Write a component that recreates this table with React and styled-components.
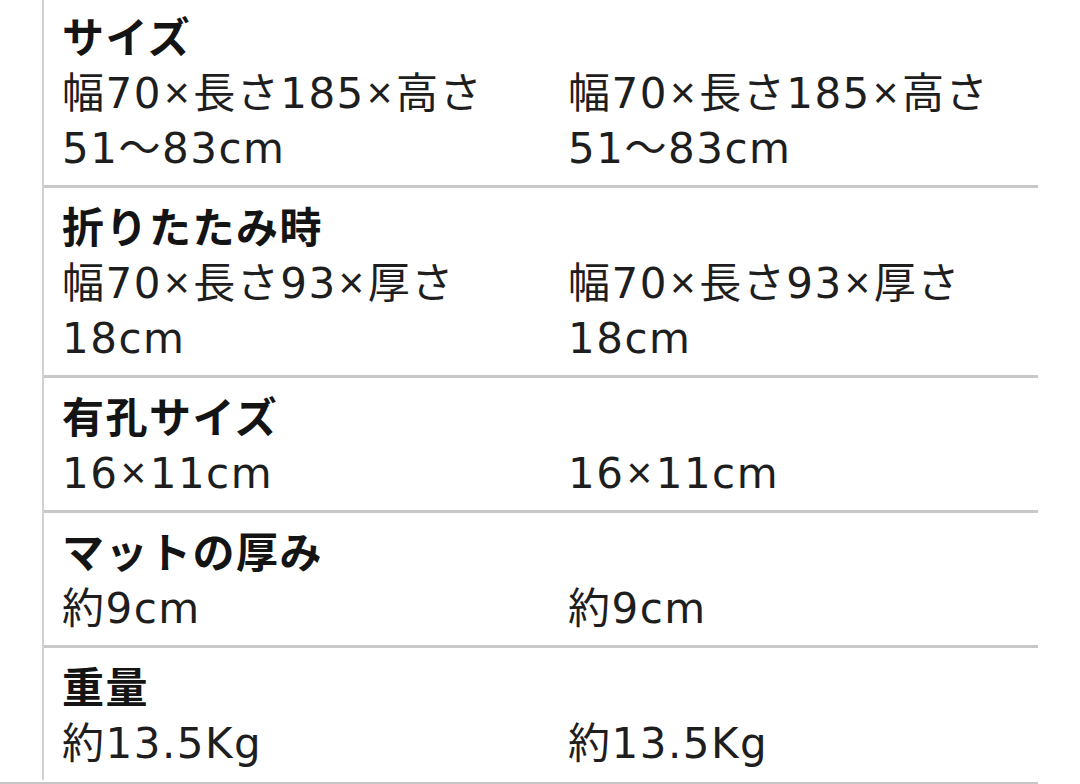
import React from "react";
import styled, { createGlobalStyle } from "styled-components";

const Global = createGlobalStyle`
  html, body { margin: 0; padding: 0; background: #ffffff; }
  body { font-family: "Noto Sans CJK JP", "Noto Sans", sans-serif; color: #1a1a1a; overflow: hidden; }
`;

const Page = styled.div`
  width: 1038px;
  height: 784px;
  box-sizing: border-box;
  border-bottom: 2px solid #c6c6c6;
  overflow: hidden;
`;

const Table = styled.div`
  margin-left: 42px;
  margin-top: -2px;
  border-left: 2px solid #d2d2d2;
  display: flex;
  flex-direction: column;
`;

const Section = styled.section`
  padding: 11px 0 9px 18px;
  border-bottom: ${(p) => (p.$last ? "none" : "3px solid #c8c8c8")};
`;

const Heading = styled.h3`
  margin: 0;
  font-family: "Noto Sans CJK JP", sans-serif;
  font-size: 42px;
  font-weight: 700;
  line-height: 52px;
  color: #141414;
  letter-spacing: 1.5px;
`;

const Values = styled.div`
  display: grid;
  grid-template-columns: 506px 1fr;
  padding-top: 5px;
`;

const Cell = styled.div`
  font-family: "DejaVu Sans", "Noto Sans CJK JP", sans-serif;
  font-size: 42px;
  font-weight: 400;
  line-height: 55px;
  color: #1e1e1e;
  letter-spacing: 1.5px;
  white-space: nowrap;
`;

const Times = styled.span`
  font-family: "Liberation Sans", sans-serif;
  font-size: 44px;
  line-height: 1;
  margin: 0 2px;
`;

const data = [
  { title: "サイズ", lines: ["幅70×長さ185×高さ", "51〜83cm"] },
  { title: "折りたたみ時", lines: ["幅70×長さ93×厚さ", "18cm"] },
  { title: "有孔サイズ", lines: ["16×11cm"] },
  { title: "マットの厚み", lines: ["約9cm"] },
  { title: "重量", lines: ["約13.5Kg"] },
];

function Line({ text }) {
  const parts = text.split("×");
  return parts.map((p, i) => (
    <React.Fragment key={i}>
      {i > 0 && <Times>×</Times>}
      {p}
    </React.Fragment>
  ));
}

function ValueCell({ lines }) {
  return (
    <Cell>
      {lines.map((l, i) => (
        <React.Fragment key={i}>
          {i > 0 && <br />}
          <Line text={l} />
        </React.Fragment>
      ))}
    </Cell>
  );
}

export default function App() {
  return (
    <>
      <Global />
      <Page>
        <Table>
          {data.map((d, i) => (
            <Section key={d.title} $last={i === data.length - 1}>
              <Heading>{d.title}</Heading>
              <Values>
                <ValueCell lines={d.lines} />
                <ValueCell lines={d.lines} />
              </Values>
            </Section>
          ))}
        </Table>
      </Page>
    </>
  );
}
